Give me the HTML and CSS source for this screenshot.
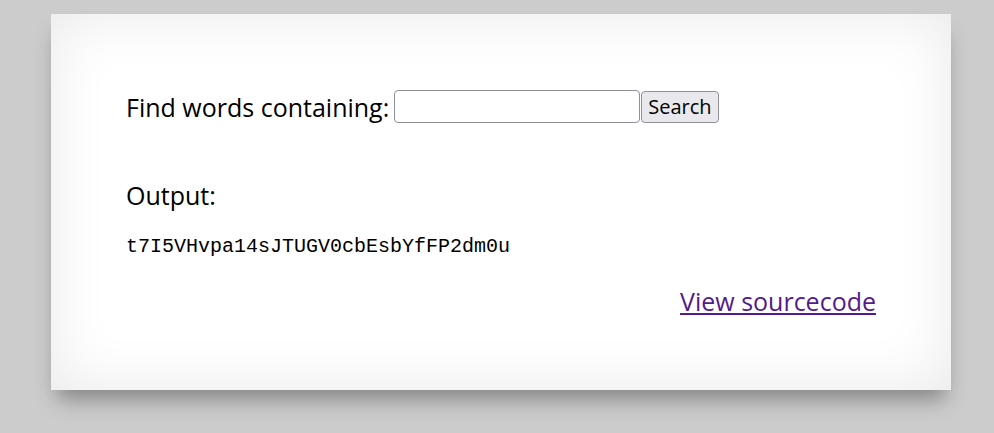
FILE: index.html
```html
<!DOCTYPE html>
<html lang="en">
<head>
  <meta charset="UTF-8" />
  <title>Find words</title>
  <link rel="stylesheet" href="styles.css">
</head>
<body>

  <div class="card">
    <form class="search-row" onsubmit="return false;">
      <label for="query">Find words containing:</label>
      <input type="text" id="query" class="query" />
      <button type="submit" class="search-btn">Search</button>
    </form>

    <h2 class="output-title">Output:</h2>
    <div class="output">t7I5VHvpa14sJTUGV0cbEsbYfFP2dm0u</div>

    <div class="source">
      <a href="#">View sourcecode</a>
    </div>
  </div>

</body>
</html>
```

FILE: styles.css
```css
body {
  margin: 0;
  padding-bottom: 40px;
  background-color: #cccccc;
  font-family: "Open Sans", "Noto Sans", sans-serif;
  color: #000;
}

.card {
  width: 900px;
  height: 376px;
  box-sizing: border-box;
  margin: 14px 0 0 51px;
  padding: 76px 75px 0;
  background-color: #fff;
  box-shadow: 0 15px 20px -6px rgba(0,0,0,0.35), inset 0 0 60px rgba(0,0,0,0.09);
}

.search-row {
  display: flex;
  align-items: center;
  height: 33px;
  font-size: 25px;
}

.search-row label {
  margin-right: 5px;
}

.query {
  width: 246px;
  height: 33px;
  box-sizing: border-box;
  border: 1px solid #8f8f9d;
  border-radius: 4px;
  font-size: 20px;
  padding: 2px 4px;
}

.search-btn {
  height: 32px;
  margin-left: 1px;
  box-sizing: border-box;
  border: 1px solid #8f8f9d;
  border-radius: 4px;
  background-color: #e9e9ed;
  font-family: "Open Sans", "Noto Sans", sans-serif;
  font-size: 20px;
  padding: 0 6px;
  color: #000;
}

.output-title {
  margin: 56px 0 0;
  font-size: 25px;
  font-weight: normal;
  line-height: 32px;
}

.output {
  margin-top: 24px;
  font-family: "Liberation Mono", monospace;
  font-size: 20px;
  line-height: 24px;
}

.source {
  margin-top: 26px;
  text-align: right;
  font-size: 25px;
  line-height: 32px;
}

.source a {
  color: #551a8b;
}
```
